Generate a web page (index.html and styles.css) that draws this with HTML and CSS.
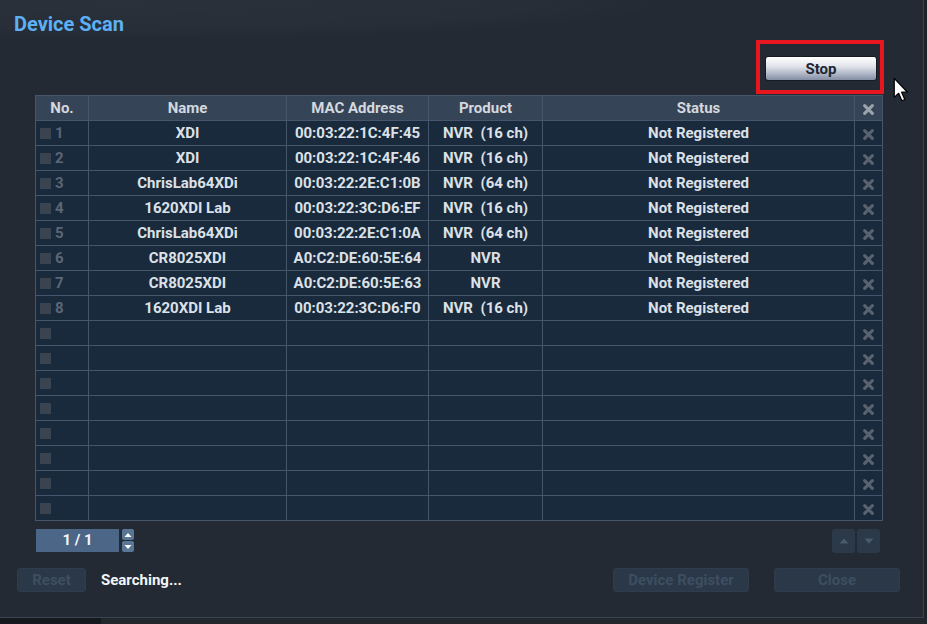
FILE: index.html
```html
<!DOCTYPE html>
<html>
<head>
    <title>Device Scan</title>
    <link rel="stylesheet" href="styles.css">
</head>
<body>
    <div class="dialog">
        <div class="title">Device Scan</div>

        <div class="toolbar">
            <div class="highlight">
                <button class="stop-btn">Stop</button>
            </div>
        </div>

        <table class="scan-table">
            <colgroup>
                <col class="c-no"><col class="c-name"><col class="c-mac"><col class="c-product"><col class="c-status"><col class="c-del">
            </colgroup>
            <thead>
                <tr>
                    <th>No.</th><th>Name</th><th>MAC Address</th><th>Product</th><th>Status</th>
                    <th class="del"><svg class="x-icon" viewBox="0 0 10 10"><path d="M1.5 1.5L8.5 8.5M8.5 1.5L1.5 8.5"/></svg></th>
                </tr>
            </thead>
            <tbody>
                <tr><td class="no"><span class="chk"></span>1</td><td>XDI</td><td>00:03:22:1C:4F:45</td><td>NVR&nbsp; (16 ch)</td><td>Not Registered</td><td class="del"><svg class="x-icon" viewBox="0 0 10 10"><path d="M1.5 1.5L8.5 8.5M8.5 1.5L1.5 8.5"/></svg></td></tr>
                <tr><td class="no"><span class="chk"></span>2</td><td>XDI</td><td>00:03:22:1C:4F:46</td><td>NVR&nbsp; (16 ch)</td><td>Not Registered</td><td class="del"><svg class="x-icon" viewBox="0 0 10 10"><path d="M1.5 1.5L8.5 8.5M8.5 1.5L1.5 8.5"/></svg></td></tr>
                <tr><td class="no"><span class="chk"></span>3</td><td>ChrisLab64XDi</td><td>00:03:22:2E:C1:0B</td><td>NVR&nbsp; (64 ch)</td><td>Not Registered</td><td class="del"><svg class="x-icon" viewBox="0 0 10 10"><path d="M1.5 1.5L8.5 8.5M8.5 1.5L1.5 8.5"/></svg></td></tr>
                <tr><td class="no"><span class="chk"></span>4</td><td>1620XDI Lab</td><td>00:03:22:3C:D6:EF</td><td>NVR&nbsp; (16 ch)</td><td>Not Registered</td><td class="del"><svg class="x-icon" viewBox="0 0 10 10"><path d="M1.5 1.5L8.5 8.5M8.5 1.5L1.5 8.5"/></svg></td></tr>
                <tr><td class="no"><span class="chk"></span>5</td><td>ChrisLab64XDi</td><td>00:03:22:2E:C1:0A</td><td>NVR&nbsp; (64 ch)</td><td>Not Registered</td><td class="del"><svg class="x-icon" viewBox="0 0 10 10"><path d="M1.5 1.5L8.5 8.5M8.5 1.5L1.5 8.5"/></svg></td></tr>
                <tr><td class="no"><span class="chk"></span>6</td><td>CR8025XDI</td><td>A0:C2:DE:60:5E:64</td><td>NVR</td><td>Not Registered</td><td class="del"><svg class="x-icon" viewBox="0 0 10 10"><path d="M1.5 1.5L8.5 8.5M8.5 1.5L1.5 8.5"/></svg></td></tr>
                <tr><td class="no"><span class="chk"></span>7</td><td>CR8025XDI</td><td>A0:C2:DE:60:5E:63</td><td>NVR</td><td>Not Registered</td><td class="del"><svg class="x-icon" viewBox="0 0 10 10"><path d="M1.5 1.5L8.5 8.5M8.5 1.5L1.5 8.5"/></svg></td></tr>
                <tr><td class="no"><span class="chk"></span>8</td><td>1620XDI Lab</td><td>00:03:22:3C:D6:F0</td><td>NVR&nbsp; (16 ch)</td><td>Not Registered</td><td class="del"><svg class="x-icon" viewBox="0 0 10 10"><path d="M1.5 1.5L8.5 8.5M8.5 1.5L1.5 8.5"/></svg></td></tr>
                <tr><td class="no"><span class="chk"></span></td><td></td><td></td><td></td><td></td><td class="del"><svg class="x-icon" viewBox="0 0 10 10"><path d="M1.5 1.5L8.5 8.5M8.5 1.5L1.5 8.5"/></svg></td></tr>
                <tr><td class="no"><span class="chk"></span></td><td></td><td></td><td></td><td></td><td class="del"><svg class="x-icon" viewBox="0 0 10 10"><path d="M1.5 1.5L8.5 8.5M8.5 1.5L1.5 8.5"/></svg></td></tr>
                <tr><td class="no"><span class="chk"></span></td><td></td><td></td><td></td><td></td><td class="del"><svg class="x-icon" viewBox="0 0 10 10"><path d="M1.5 1.5L8.5 8.5M8.5 1.5L1.5 8.5"/></svg></td></tr>
                <tr><td class="no"><span class="chk"></span></td><td></td><td></td><td></td><td></td><td class="del"><svg class="x-icon" viewBox="0 0 10 10"><path d="M1.5 1.5L8.5 8.5M8.5 1.5L1.5 8.5"/></svg></td></tr>
                <tr><td class="no"><span class="chk"></span></td><td></td><td></td><td></td><td></td><td class="del"><svg class="x-icon" viewBox="0 0 10 10"><path d="M1.5 1.5L8.5 8.5M8.5 1.5L1.5 8.5"/></svg></td></tr>
                <tr><td class="no"><span class="chk"></span></td><td></td><td></td><td></td><td></td><td class="del"><svg class="x-icon" viewBox="0 0 10 10"><path d="M1.5 1.5L8.5 8.5M8.5 1.5L1.5 8.5"/></svg></td></tr>
                <tr><td class="no"><span class="chk"></span></td><td></td><td></td><td></td><td></td><td class="del"><svg class="x-icon" viewBox="0 0 10 10"><path d="M1.5 1.5L8.5 8.5M8.5 1.5L1.5 8.5"/></svg></td></tr>
                <tr><td class="no"><span class="chk"></span></td><td></td><td></td><td></td><td></td><td class="del"><svg class="x-icon" viewBox="0 0 10 10"><path d="M1.5 1.5L8.5 8.5M8.5 1.5L1.5 8.5"/></svg></td></tr>
            </tbody>
        </table>

        <div class="pager-row">
            <div class="pager">
                <div class="page-box">1 / 1</div>
                <div class="spin">
                    <span class="spin-btn"><svg viewBox="0 0 8 6"><path d="M4 1L7.5 5H0.5Z"/></svg></span>
                    <span class="spin-btn"><svg viewBox="0 0 8 6"><path d="M0.5 1H7.5L4 5Z"/></svg></span>
                </div>
            </div>
            <div class="scroll-btns">
                <span class="scroll-btn"><svg viewBox="0 0 10 6"><path d="M5 0.5L9.5 5.5H0.5Z"/></svg></span>
                <span class="scroll-btn"><svg viewBox="0 0 10 6"><path d="M0.5 0.5H9.5L5 5.5Z"/></svg></span>
            </div>
        </div>

        <div class="footer">
            <div class="footer-left">
                <button class="btn-off btn-reset">Reset</button>
                <span class="status-text">Searching...</span>
            </div>
            <div class="footer-right">
                <button class="btn-off btn-register">Device Register</button>
                <button class="btn-off btn-close">Close</button>
            </div>
        </div>

        <svg class="cursor" viewBox="0 0 13 21"><path d="M1 1V16.5L4.6 13.2L7.2 19.2L9.6 18.2L7 12.3H11.8Z"/></svg>
    </div>
    <div class="taskbar"><span class="taskbar-dark"></span></div>
</body>
</html>
```

FILE: styles.css
```css
body {
    margin: 0;
    font-family: Roboto, "Liberation Sans", sans-serif;
    background: #1f242b;
    overflow: hidden;
}

.dialog {
    position: relative;
    width: 923px;
    height: 617px;
    border-right: 1px solid #3a4350;
    border-bottom: 1px solid #3a4350;
    background:
        radial-gradient(ellipse 560px 40px at 120px 0, rgba(255, 255, 255, 0.03), rgba(255, 255, 255, 0.02) 75%, transparent 100%),
        #232a34;
    display: flex;
    flex-direction: column;
}

.title {
    padding: 12px 14px 0;
    height: 24px;
    line-height: 24px;
    font-size: 20px;
    font-weight: bold;
    color: #5db0f6;
}

.toolbar {
    display: flex;
    justify-content: flex-end;
    margin-top: 4px;
    padding-right: 39px;
}

.highlight {
    border: 4px solid #e8161f;
    padding: 12px 3px 9px 5px;
    display: flex;
}

.stop-btn {
    width: 112px;
    height: 25px;
    border: 1px solid #141a22;
    border-radius: 3px;
    background: linear-gradient(#ffffff, #e2e5eb 40%, #a7afc0 78%, #838da3);
    font-family: inherit;
    font-size: 15px;
    font-weight: bold;
    color: #1d2738;
    padding: 0;
}

.scan-table {
    margin: 1px 0 0 35px;
    border-collapse: collapse;
    table-layout: fixed;
    width: 847px;
    font-size: 15px;
    font-weight: bold;
    color: #dce1e7;
}

.c-no { width: 53px; }
.c-name { width: 198px; }
.c-mac { width: 142px; }
.c-product { width: 114px; }
.c-status { width: 312px; }
.c-del { width: 28px; }

.scan-table th,
.scan-table td {
    height: 24px;
    padding: 0;
    border: 1px solid #46556b;
    text-align: center;
    white-space: nowrap;
    line-height: 24px;
}

.scan-table th {
    background: #364457;
    color: #d3d8de;
}

.scan-table td {
    background: #1a2a3d;
}

.scan-table td.no {
    text-align: left;
    padding-left: 4px;
    color: #5b6676;
}

.chk {
    display: inline-block;
    width: 11px;
    height: 11px;
    background: #3a4451;
    margin-right: 4px;
    vertical-align: -1px;
}

.del {
    line-height: 0;
}

.x-icon {
    width: 11px;
    height: 11px;
    vertical-align: middle;
}

.x-icon path {
    fill: none;
    stroke: #59636f;
    stroke-width: 2.8;
    stroke-linecap: round;
}

th .x-icon path {
    stroke: #9aa2ac;
}

.pager-row {
    display: flex;
    justify-content: space-between;
    align-items: flex-start;
    margin-top: 8px;
    padding: 0 43px 0 36px;
    height: 24px;
}

.pager {
    display: flex;
    gap: 3px;
}

.page-box {
    width: 83px;
    height: 23px;
    line-height: 23px;
    background: #4b6687;
    text-align: center;
    font-size: 15px;
    font-weight: bold;
    color: #f4f6f8;
}

.spin {
    display: flex;
    flex-direction: column;
    gap: 1px;
}

.spin-btn {
    width: 12px;
    height: 11px;
    background: #5a7697;
    border-radius: 2px;
    display: flex;
    align-items: center;
    justify-content: center;
}

.spin-btn svg {
    width: 8px;
    height: 6px;
    fill: #ffffff;
}

.scroll-btns {
    display: flex;
    gap: 2px;
}

.scroll-btn {
    width: 23px;
    height: 24px;
    background: #2b3949;
    border-radius: 3px;
    display: flex;
    align-items: center;
    justify-content: center;
}

.scroll-btn svg {
    width: 10px;
    height: 6px;
    fill: #4a5b6e;
}

.footer {
    display: flex;
    justify-content: space-between;
    margin-top: 15px;
    padding: 0 23px 0 17px;
}

.footer-left,
.footer-right {
    display: flex;
    align-items: center;
}

.footer-left {
    gap: 15px;
}

.footer-right {
    gap: 25px;
}

.btn-off {
    height: 24px;
    border: 1px solid #2e3c4d;
    border-radius: 3px;
    background: #2b3848;
    font-family: inherit;
    font-size: 15px;
    font-weight: bold;
    color: #3e4e61;
    padding: 0;
}

.btn-reset { width: 69px; }
.btn-register { width: 136px; }
.btn-close { width: 126px; }

.status-text {
    font-size: 15px;
    font-weight: bold;
    color: #f3f5f7;
}

.cursor {
    position: absolute;
    left: 893px;
    top: 77px;
    width: 16px;
    height: 26px;
}

.cursor path {
    fill: #ffffff;
    stroke: #000000;
    stroke-width: 1;
    stroke-linejoin: round;
}

.taskbar {
    height: 6px;
    background: #22272e;
}

.taskbar-dark {
    display: block;
    width: 101px;
    height: 6px;
    background: #15181c;
}
```
